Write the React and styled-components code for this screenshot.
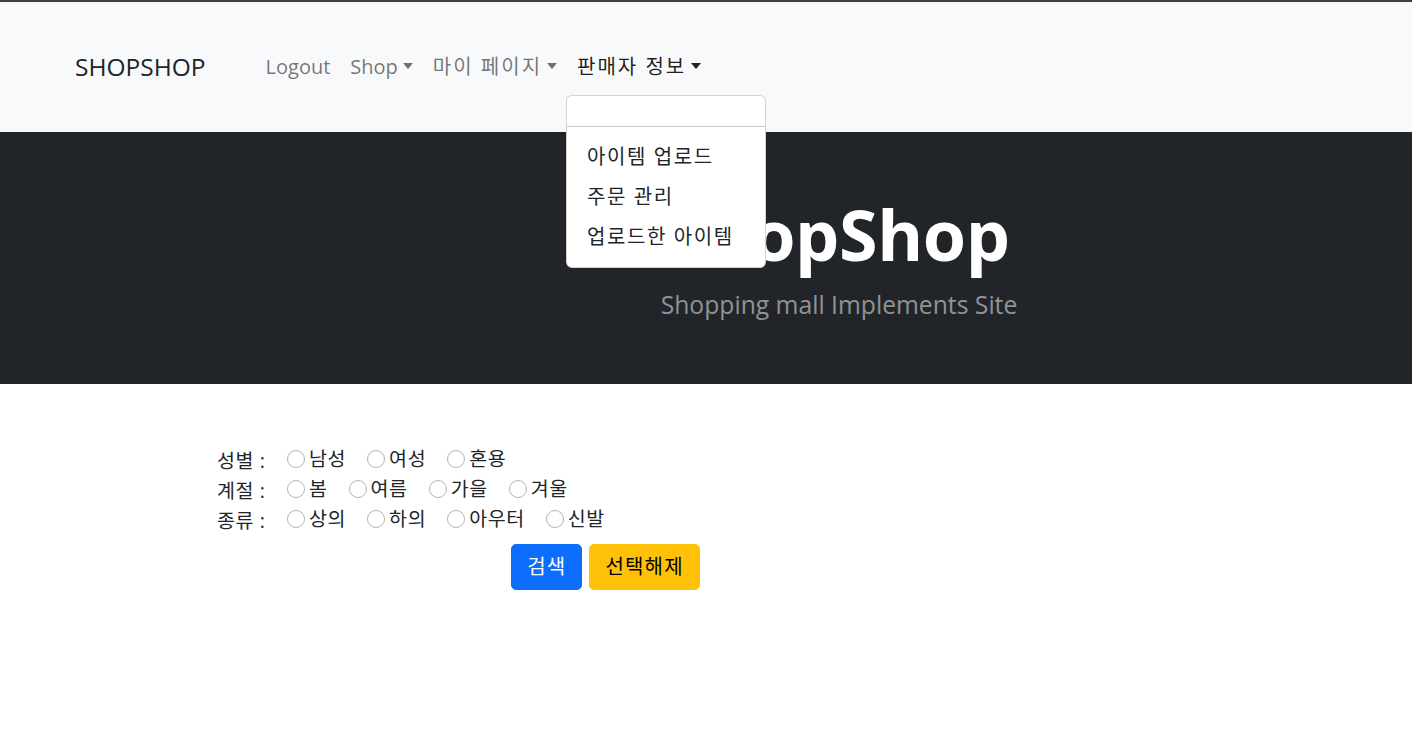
import React from "react";
import styled, { createGlobalStyle } from "styled-components";

const Global = createGlobalStyle`
  html, body { margin: 0; padding: 0; background: #fff; }
  body {
    font-family: "Open Sans", "Noto Sans CJK KR", sans-serif;
    color: #212529;
    font-size: 20px;
  }
  * { box-sizing: border-box; }
`;

const KR = `"Open Sans", "Noto Sans CJK KR", sans-serif`;

const TopLine = styled.div`
  height: 2px;
  background: #3d3f42;
`;

const NavBar = styled.nav`
  height: 130px;
  background: #f8f9fa;
  display: flex;
  align-items: center;
  padding-left: 75px;
  position: relative;
  z-index: 10;
`;

const Brand = styled.a`
  font-family: "Open Sans", sans-serif;
  font-size: 24.5px;
  color: #212529;
  text-decoration: none;
  margin-right: 50px;
  line-height: 30px;
`;

const NavList = styled.ul`
  display: flex;
  list-style: none;
  margin: 0;
  padding: 0;
`;

const NavItem = styled.li`
  position: relative;
`;

const NavLink = styled.a`
  display: flex;
  align-items: center;
  padding: 10px 10px;
  line-height: 30px;
  font-family: ${KR};
  font-size: 20px;
  letter-spacing: ${(p) => (p.$kr ? "2px" : "0")};
  color: ${(p) => (p.$active ? "rgba(0,0,0,0.88)" : "rgba(0,0,0,0.55)")};
  text-decoration: none;
  white-space: nowrap;
`;

const Caret = styled.span`
  display: inline-block;
  margin-left: 5px;
  width: 0;
  height: 0;
  border-top: 6px solid currentColor;
  border-left: 5.5px solid transparent;
  border-right: 5.5px solid transparent;
  transform: translateY(-1px);
`;

const Menu = styled.ul`
  position: absolute;
  top: calc(100% + 3px);
  left: -1px;
  width: 200px;
  margin: 0;
  padding: 10px 0;
  list-style: none;
  background: #fff;
  border: 1px solid rgba(0, 0, 0, 0.175);
  border-radius: 6px;
`;

const MenuItem = styled.li`
  padding: 5px 20px;
  height: ${(p) => (p.$empty ? "10px" : "40px")};
  line-height: 30px;
  font-family: ${KR};
  font-size: 20px;
  letter-spacing: 1.6px;
  color: #212529;
  white-space: nowrap;
`;

const Divider = styled.li`
  height: 0;
  margin: 10px 0;
  border-top: 1px solid rgba(0, 0, 0, 0.2);
`;

const Hero = styled.header`
  background: #212529;
  height: 252px;
  padding: 60px 0 0 266px;
  display: flex;
  flex-direction: column;
  align-items: center;
  text-align: center;
`;

const Title = styled.h1`
  margin: 0 0 10px;
  font-family: "Open Sans", sans-serif;
  font-weight: 700;
  font-size: 70px;
  line-height: 84px;
  letter-spacing: -0.4px;
  color: #fff;
`;

const Lead = styled.p`
  margin: 0;
  font-family: "Open Sans", sans-serif;
  font-size: 24.7px;
  line-height: 37px;
  color: rgba(255, 255, 255, 0.5);
`;

const FormSection = styled.section`
  padding: 60px 0 0 217px;
`;

const FormBox = styled.form`
  width: 777px;
  display: flex;
  flex-direction: column;
`;

const FilterRow = styled.div`
  display: flex;
  align-items: center;
  height: 30px;
  font-family: ${KR};
  font-size: 19.5px;
  letter-spacing: 0.6px;
`;

const RowLabel = styled.span`
  width: 70px;
  white-space: pre;
`;

const Options = styled.div`
  display: flex;
  align-items: center;
  gap: 21px;
`;

const Option = styled.label`
  display: flex;
  align-items: center;
  gap: 4px;
  line-height: 30px;
`;

const Radio = styled.input.attrs({ type: "radio" })`
  appearance: none;
  margin: 0;
  width: 18px;
  height: 18px;
  border: 1.5px solid #b4b4b4;
  border-radius: 50%;
  background: #fff;
`;

const ButtonRow = styled.div`
  display: flex;
  justify-content: center;
  gap: 7px;
  margin-top: 10px;
`;

const Button = styled.button`
  font-family: ${KR};
  font-size: 20px;
  letter-spacing: 1.2px;
  line-height: 30px;
  padding: 7px 15px;
  border: 1px solid ${(p) => p.$bg};
  background: ${(p) => p.$bg};
  color: ${(p) => p.$fg};
  border-radius: 5px;
`;

const filters = [
  { label: "성별 :", name: "gender", opts: ["남성", "여성", "혼용"] },
  { label: "계절 :", name: "season", opts: ["봄", "여름", "가을", "겨울"] },
  { label: "종류 :", name: "kind", opts: ["상의", "하의", "아우터", "신발"] },
];

export default function App() {
  return (
    <>
      <Global />
      <TopLine />
      <NavBar>
        <Brand href="#">SHOPSHOP</Brand>
        <NavList>
          <NavItem>
            <NavLink href="#">Logout</NavLink>
          </NavItem>
          <NavItem>
            <NavLink href="#">
              Shop<Caret />
            </NavLink>
          </NavItem>
          <NavItem>
            <NavLink href="#" $kr>
              마이 페이지<Caret />
            </NavLink>
          </NavItem>
          <NavItem>
            <NavLink href="#" $kr $active>
              판매자 정보<Caret />
            </NavLink>
            <Menu>
              <MenuItem $empty />
              <Divider />
              <MenuItem>아이템 업로드</MenuItem>
              <MenuItem>주문 관리</MenuItem>
              <MenuItem>업로드한 아이템</MenuItem>
            </Menu>
          </NavItem>
        </NavList>
      </NavBar>
      <Hero>
        <Title>ShopShop</Title>
        <Lead>Shopping mall Implements Site</Lead>
      </Hero>
      <FormSection>
        <FormBox>
          {filters.map((f) => (
            <FilterRow key={f.name}>
              <RowLabel>{f.label}</RowLabel>
              <Options>
                {f.opts.map((o) => (
                  <Option key={o}>
                    <Radio name={f.name} />
                    {o}
                  </Option>
                ))}
              </Options>
            </FilterRow>
          ))}
          <ButtonRow>
            <Button type="button" $bg="#0d6efd" $fg="#fff">
              검색
            </Button>
            <Button type="button" $bg="#ffc107" $fg="#000">
              선택해제
            </Button>
          </ButtonRow>
        </FormBox>
      </FormSection>
    </>
  );
}
